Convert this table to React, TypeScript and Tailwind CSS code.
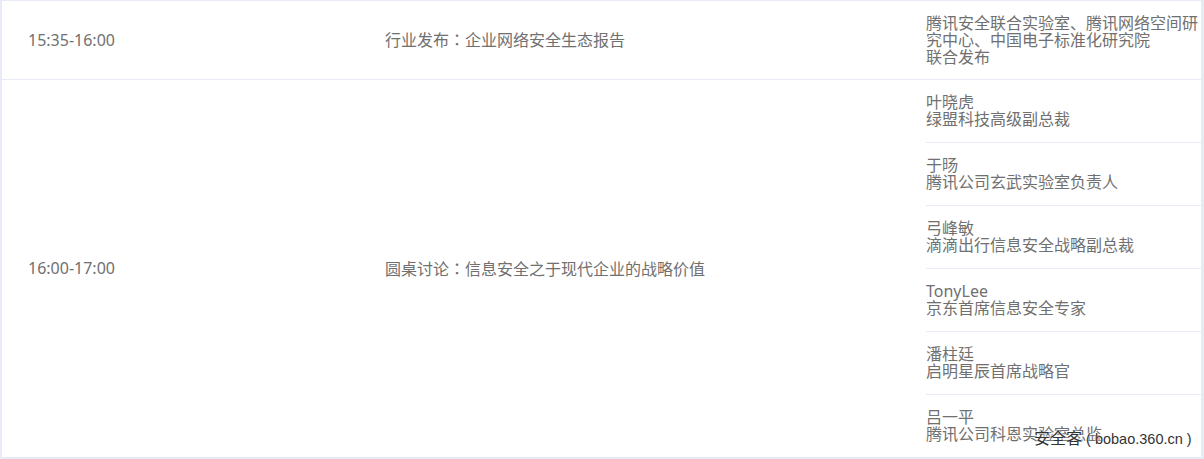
import React from 'react';

const speakers = [
  { name: '叶晓虎', title: '绿盟科技高级副总裁' },
  { name: '于旸', title: '腾讯公司玄武实验室负责人' },
  { name: '弓峰敏', title: '滴滴出行信息安全战略副总裁' },
  { name: 'TonyLee', title: '京东首席信息安全专家' },
  { name: '潘柱廷', title: '启明星辰首席战略官' },
  { name: '吕一平', title: '腾讯公司科恩实验室总监' },
];

// fullwidth colon centred, as in the original
function Colon() {
  return <span style={{ fontFamily: '"Noto Sans CJK TC", sans-serif' }}>：</span>;
}

export default function App() {
  return (
    <div
      className="relative w-[1204px] h-[459px] bg-white text-[16px] leading-[17px] text-[#707070]"
      style={{ fontFamily: '"Noto Sans", "Noto Sans CJK SC", sans-serif' }}
    >
      <div className="border-l-2 border-t border-r-[3px] border-b-2 border-[#e6ebf6]">
        {/* row 1 */}
        <div className="flex h-[79px] border-b border-[#e6ebf6]">
          <div className="w-[383px] pl-[26px] flex items-center">15:35-16:00</div>
          <div className="w-[541px] flex items-center">
            <span>行业发布<Colon />企业网络安全生态报告</span>
          </div>
          <div className="flex-1 flex flex-col justify-center">
            <span>腾讯安全联合实验室、腾讯网络空间研</span>
            <span>究中心、中国电子标准化研究院</span>
            <span>联合发布</span>
          </div>
        </div>

        {/* row 2 */}
        <div className="flex h-[377px]">
          <div className="w-[383px] pl-[26px] flex items-center">16:00-17:00</div>
          <div className="w-[541px] flex items-center">
            <span>圆桌讨论<Colon />信息安全之于现代企业的战略价值</span>
          </div>
          <div className="flex-1 flex flex-col">
            {speakers.map((s, i) => (
              <div
                key={s.name}
                className={`h-[62px] flex flex-col justify-center ${i > 0 ? 'box-content border-t border-[#e6ebf6]' : ''}`}
              >
                <span>{s.name}</span>
                <span>{s.title}</span>
              </div>
            ))}
          </div>
        </div>
      </div>

      {/* watermark */}
      <div
        className="absolute left-[1034px] top-[429px] leading-[18px] text-[#333] whitespace-nowrap"
        style={{ textShadow: '0 0 2px #fff, 0 0 2px #fff' }}
      >
        <span className="text-[16px]">安全客</span>
        <span className="text-[14.5px]" style={{ fontFamily: '"Liberation Sans", "Noto Sans CJK SC", sans-serif' }}>
          {' '}( bobao.360.cn )
        </span>
      </div>
    </div>
  );
}
